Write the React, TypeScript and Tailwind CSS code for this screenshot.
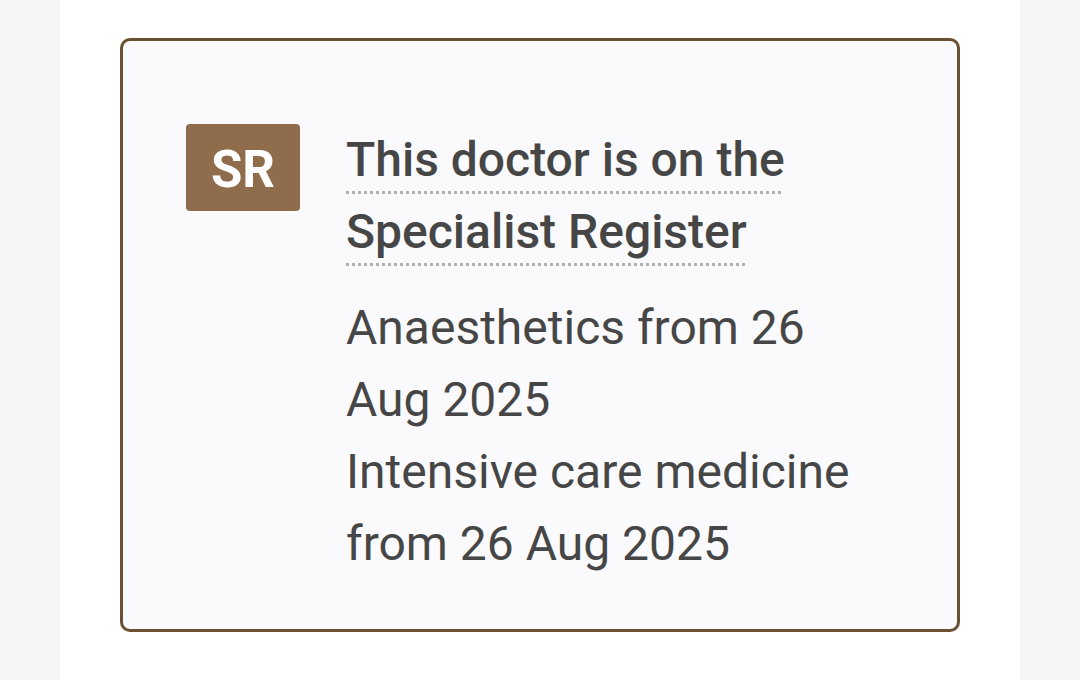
import React from 'react';

const specialties = [
  'Anaesthetics from 26 Aug 2025',
  'Intensive care medicine from 26 Aug 2025',
];

export default function App() {
  return (
    <div className="min-h-[680px] bg-[#f5f5f5] px-[60px]" style={{ fontFamily: 'Roboto, "Noto Sans", sans-serif' }}>
      <div className="min-h-[680px] bg-white px-[60px] pt-[38px] pb-[48px]">
        {/* Specialist register card */}
        <div className="flex gap-[46px] rounded-[10px] border-[3px] border-[#6b4f33] bg-[#fafafc] pl-[63px] pr-[97px] pt-[83px] pb-[49px]">
          <div className="flex h-[87px] w-[114px] shrink-0 items-center justify-center rounded-[4px] bg-[#8f6c4c] pt-[3px] text-[51px] font-bold leading-none text-white">
            SR
          </div>
          <div className="flex flex-col gap-[24px] text-[#464646]">
            <div className="text-[48px] font-medium leading-[72px]">
              <span className="underline decoration-dotted decoration-[#b0b0b0] decoration-[3px] underline-offset-[15px]">
                This doctor is on the Specialist Register
              </span>
            </div>
            <div className="text-[48px] leading-[72px]">
              {specialties.map((s) => (
                <div key={s}>{s}</div>
              ))}
            </div>
          </div>
        </div>
      </div>
    </div>
  );
}
